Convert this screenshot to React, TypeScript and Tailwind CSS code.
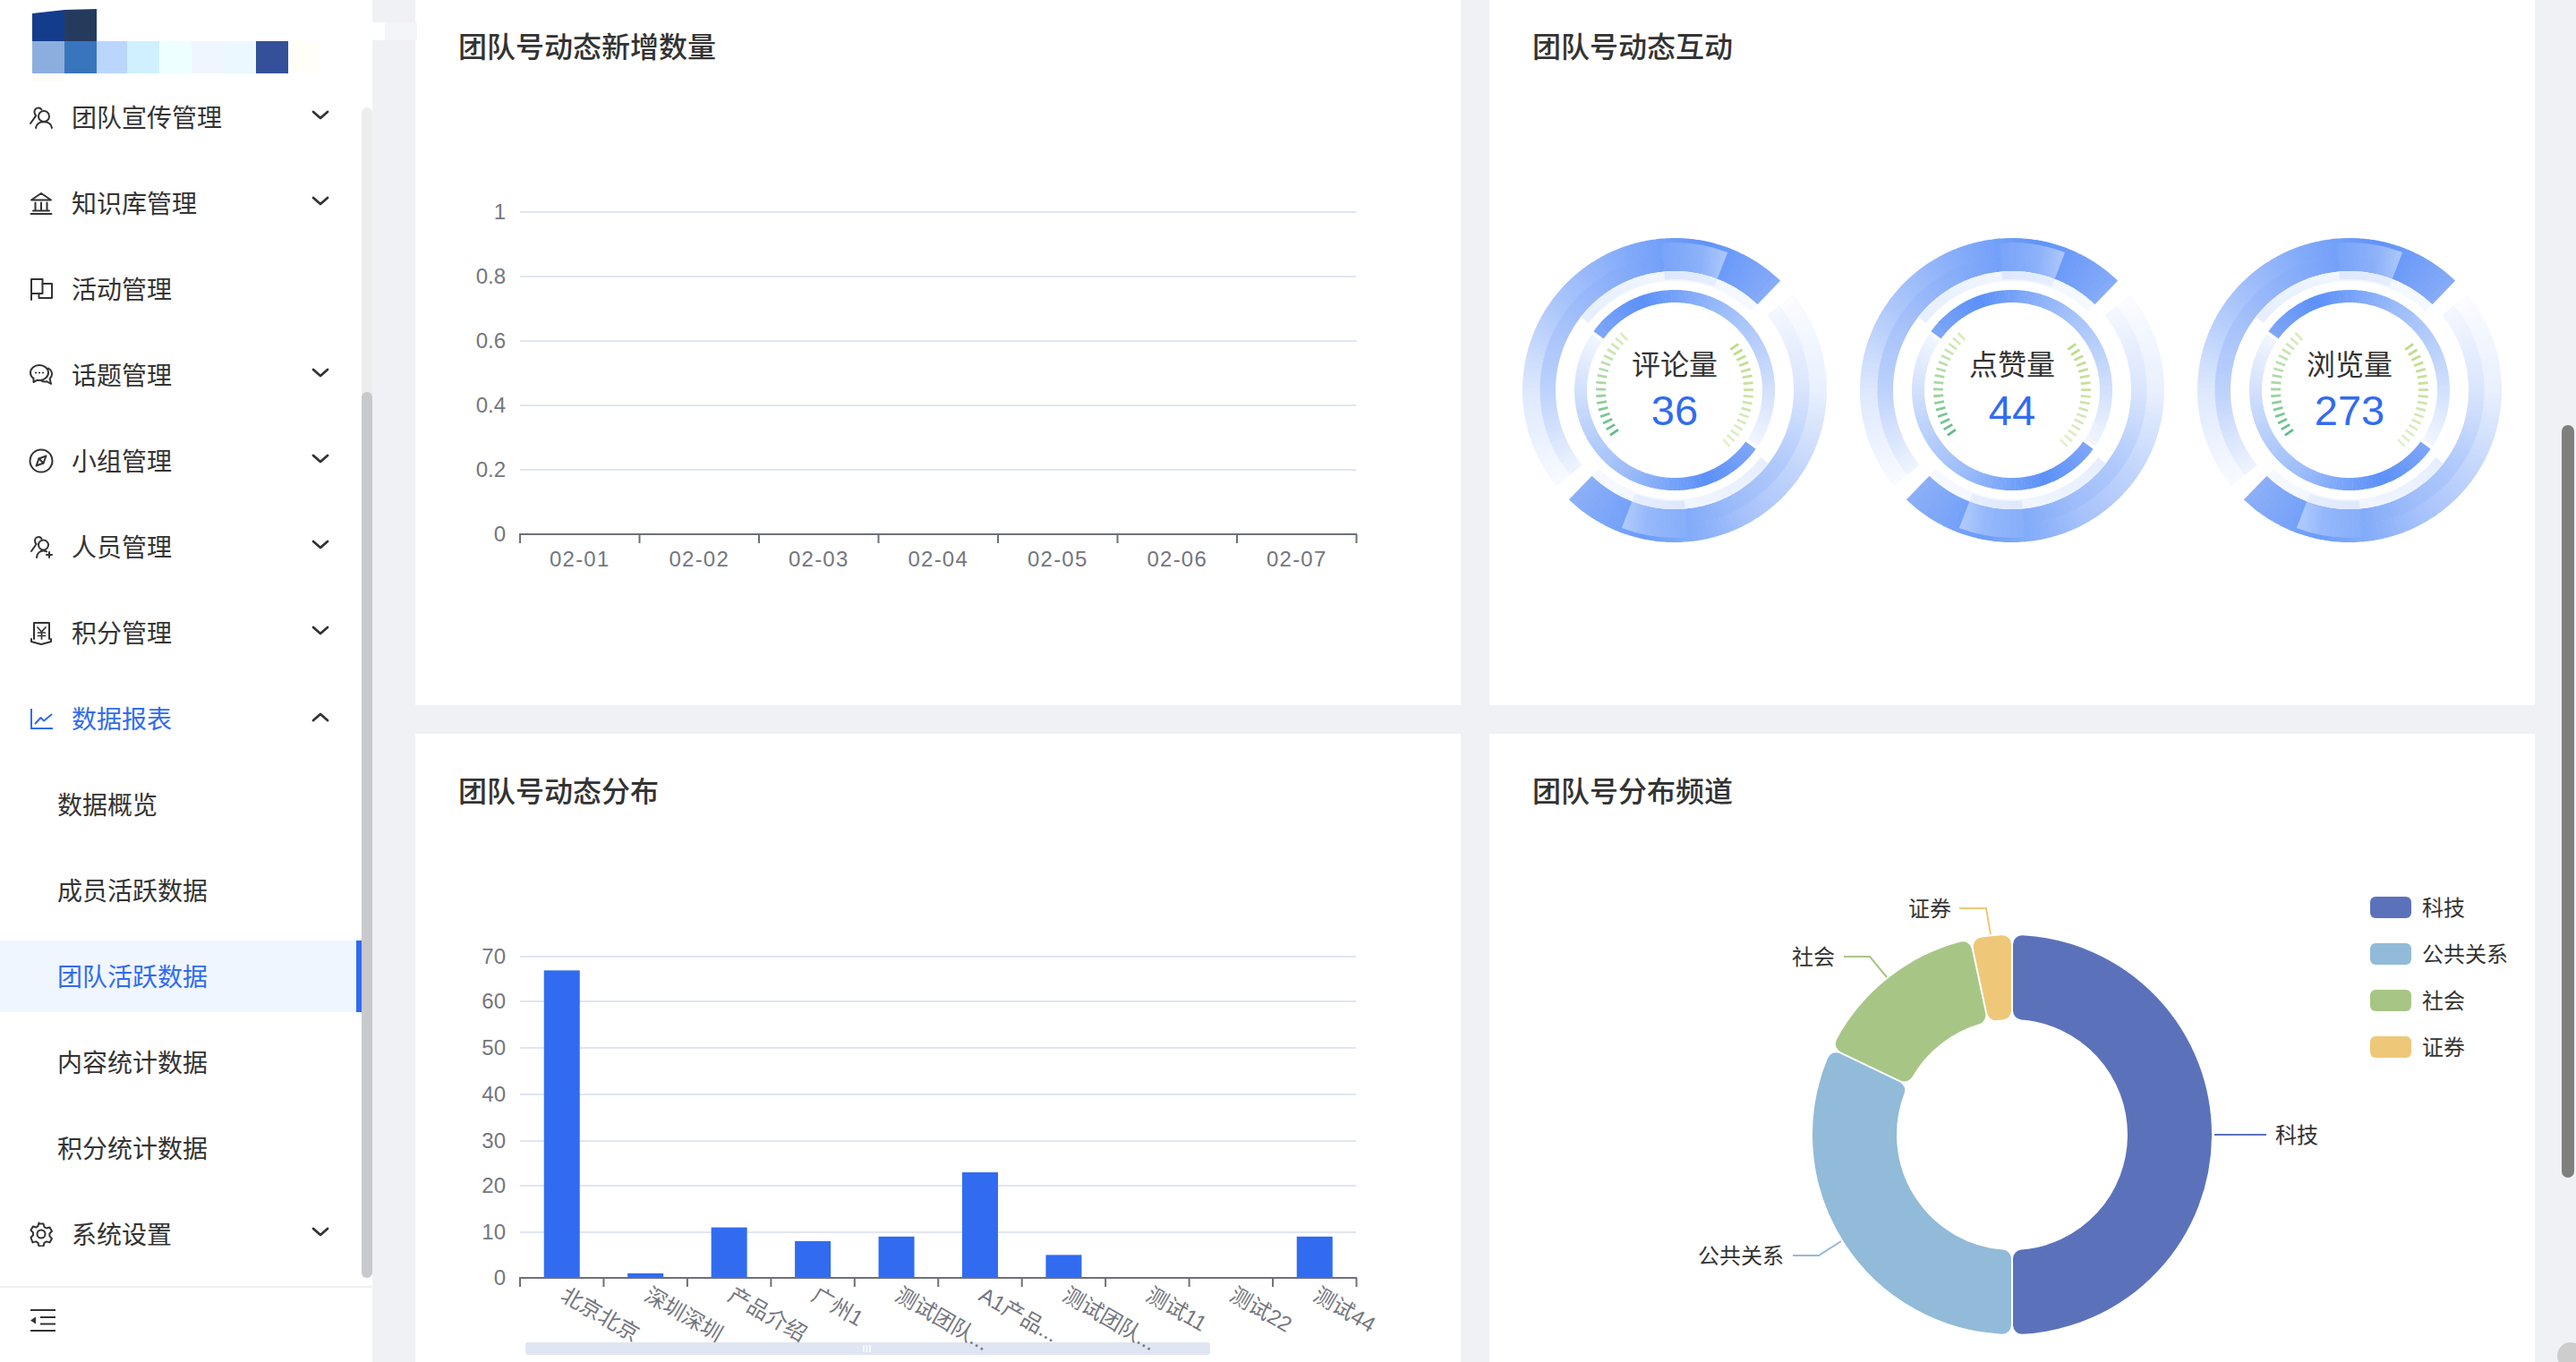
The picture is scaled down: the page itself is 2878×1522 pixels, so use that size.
import React from "react";

type Stop = [number, string];

const hex = (c: string) => [1, 3, 5].map((i) => parseInt(c.slice(i, i + 2), 16));
const colorAt = (stops: Stop[], a: number) => {
  for (let i = 0; i < stops.length - 1; i++) {
    const [a0, c0] = stops[i];
    const [a1, c1] = stops[i + 1];
    if (a >= a0 && a <= a1) {
      const t = (a - a0) / (a1 - a0);
      const x = hex(c0);
      const y = hex(c1);
      return `rgb(${x.map((v, k) => Math.round(v + (y[k] - v) * t)).join(",")})`;
    }
  }
  return stops[stops.length - 1][1];
};
const pt = (cx: number, cy: number, r: number, deg: number) => {
  const t = (deg * Math.PI) / 180;
  return [cx + r * Math.sin(t), cy - r * Math.cos(t)];
};
const sector = (cx: number, cy: number, r0: number, r1: number, a0: number, a1: number) => {
  const [x0, y0] = pt(cx, cy, r1, a0);
  const [x1, y1] = pt(cx, cy, r1, a1);
  const [x2, y2] = pt(cx, cy, r0, a1);
  const [x3, y3] = pt(cx, cy, r0, a0);
  const large = a1 - a0 > 180 ? 1 : 0;
  return `M${x0} ${y0}A${r1} ${r1} 0 ${large} 1 ${x1} ${y1}L${x2} ${y2}A${r0} ${r0} 0 ${large} 0 ${x3} ${y3}Z`;
};

function Band({ cx, cy, r0, r1, stops, rot = 0 }: { cx: number; cy: number; r0: number; r1: number; stops: Stop[]; rot?: number }) {
  const start = stops[0][0];
  const end = stops[stops.length - 1][0];
  const items: React.ReactNode[] = [];
  for (let a = start; a < end; a += 2) {
    const next = Math.min(a + 2.25, end);
    items.push(<path key={a} d={sector(cx, cy, r0, r1, a + rot, next + rot)} fill={colorAt(stops, a + 1)} />);
  }
  return <g>{items}</g>;
}

const outerA: Stop[] = [[231, "#f8faff"], [270, "#dde8fd"], [305, "#adc7fb"], [350, "#78a3f9"], [372, "#5f93f8"], [404, "#86abf8"]];
const midA: Stop[] = [[231, "#eff4fe"], [270, "#bcd1fc"], [305, "#a3bffa"], [350, "#78a3f9"], [372, "#5f93f8"], [404, "#86abf8"]];
const outerB: Stop[] = [[51, "#fafcff"], [90, "#e9f0fe"], [125, "#c0d4fc"], [150, "#a8c3fb"], [172, "#85adf9"], [192, "#6b9cf9"], [224, "#8cafF8"]];
const midB: Stop[] = [[51, "#f4f7ff"], [90, "#d9e5fd"], [125, "#b0cafb"], [150, "#9fbdfa"], [172, "#85adf9"], [192, "#6b9cf9"], [224, "#8cafF8"]];
const paleStops: Stop[] = [[308, "#e6eefe"], [350, "#f0f5ff"], [404, "#f6f9ff"]];
const innerStops: Stop[] = [[306, "#7ea6f8"], [340, "#5b90f8"], [390, "#9bbcfa"], [440, "#c8dafc"], [484, "#f2f6ff"]];

function Gauge({ cx, cy, label, value }: { cx: number; cy: number; label: string; value: string }) {
  const ticks: React.ReactNode[] = [];
  const left: Stop[] = [[235, "#5fbb88"], [270, "#a2d5a0"], [317, "#dcecbc"]];
  const right: Stop[] = [[54, "#bcdc88"], [95, "#cbe3a4"], [137, "#e4f0cf"]];
  for (let a = 235; a <= 317; a += 5.1) {
    const [x0, y0] = pt(cx, cy, 77, a);
    const [x1, y1] = pt(cx, cy, 88, a);
    ticks.push(<line key={`l${a}`} x1={x0} y1={y0} x2={x1} y2={y1} stroke={colorAt(left, a)} strokeWidth={2.8} />);
  }
  for (let a = 54; a <= 137; a += 5.1) {
    const [x0, y0] = pt(cx, cy, 77, a);
    const [x1, y1] = pt(cx, cy, 88, a);
    ticks.push(<line key={`r${a}`} x1={x0} y1={y0} x2={x1} y2={y1} stroke={colorAt(right, a)} strokeWidth={2.8} />);
  }
  return (
    <g>
      <Band cx={cx} cy={cy} r0={150} r1={170} stops={outerA} />
      <Band cx={cx} cy={cy} r0={133} r1={150.5} stops={midA} />
      <Band cx={cx} cy={cy} r0={150} r1={170} stops={outerB} />
      <Band cx={cx} cy={cy} r0={133} r1={150.5} stops={midB} />
      {[0, 180].map((rot) => (
        <g key={rot}>
          <Band cx={cx} cy={cy} r0={122} r1={133} stops={paleStops} rot={rot} />
          <Band cx={cx} cy={cy} r0={98} r1={112} stops={innerStops} rot={rot} />
          <g transform={`rotate(${rot} ${cx} ${cy})`}>
            <path d={sector(cx, cy, 133, 165, -5, 21)} fill="url(#patch)" />
            <path d={sector(cx, cy, 124, 133, -5, 21)} fill="url(#patchLow)" />
          </g>
        </g>
      ))}
      {ticks}
      <text x={cx} y={cy - 17} textAnchor="middle" fontSize={32} fill="#333333">{label}</text>
      <text x={cx} y={cy + 39} textAnchor="middle" fontSize={47} fill="#316bf0">{value}</text>
    </g>
  );
}

function Slice({ a0, a1, color }: { a0: number; a1: number; color: string }) {
  const cx = 2248, cy = 1268, R = 223, r = 129, rad = 10, gap = 1;
  const ro = R - rad, ri = r + rad;
  const d = rad + gap;
  const oa = (Math.asin(d / ro) * 180) / Math.PI;
  const ia = (Math.asin(d / ri) * 180) / Math.PI;
  const [x0, y0] = pt(cx, cy, ro, a0 + oa);
  const [x1, y1] = pt(cx, cy, ro, a1 - oa);
  const [x2, y2] = pt(cx, cy, ri, a1 - ia);
  const [x3, y3] = pt(cx, cy, ri, a0 + ia);
  const path = `M${x0} ${y0}A${ro} ${ro} 0 0 1 ${x1} ${y1}L${x2} ${y2}A${ri} ${ri} 0 0 0 ${x3} ${y3}Z`;
  return <path d={path} fill={color} stroke={color} strokeWidth={rad * 2} strokeLinejoin="round" />;
}

const svgFont = "font-['Liberation_Sans','Noto_Sans_CJK_SC',sans-serif]";
const axisText = "#74767e";

function LineChart() {
  const ys = [["1", 237], ["0.8", 309], ["0.6", 381], ["0.4", 453], ["0.2", 525]] as const;
  const days = ["02-01", "02-02", "02-03", "02-04", "02-05", "02-06", "02-07"];
  const step = (1515.5 - 581) / 7;
  return (
    <svg viewBox="464 76 1168 712" width={1168} height={712} className={svgFont}>
      {ys.map(([t, y]) => (
        <g key={t}>
          <line x1={581} x2={1515.5} y1={y} y2={y} stroke="#e0e6f1" strokeWidth={2} />
          <text x={565} y={y + 8} textAnchor="end" fontSize={24} fill={axisText}>{t}</text>
        </g>
      ))}
      <text x={565} y={605} textAnchor="end" fontSize={24} fill={axisText}>0</text>
      <line x1={580} x2={1516} y1={597} y2={597} stroke="#6e7079" strokeWidth={2} />
      {Array.from({ length: 8 }).map((_, i) => (
        <line key={i} x1={581 + step * i} x2={581 + step * i} y1={597} y2={607} stroke="#6e7079" strokeWidth={2} />
      ))}
      {days.map((d, i) => (
        <text key={d} x={581 + step * (i + 0.5)} y={633} textAnchor="middle" fontSize={24} letterSpacing={1.2} fill={axisText}>{d}</text>
      ))}
    </svg>
  );
}

function GaugeChart() {
  return (
    <svg viewBox="1664 76 1168 712" width={1168} height={712} className={svgFont}>
      <defs>
        <linearGradient id="patch" x1="0" y1="0" x2="1" y2="0">
          <stop offset="0" stopColor="#ffffff" stopOpacity={0.04} />
          <stop offset="1" stopColor="#ffffff" stopOpacity={0.45} />
        </linearGradient>
        <linearGradient id="patchLow" x1="0" y1="0" x2="1" y2="0">
          <stop offset="0" stopColor="#dbe6fd" stopOpacity={0.9} />
          <stop offset="1" stopColor="#dbe6fd" stopOpacity={0.5} />
        </linearGradient>
      </defs>
      <Gauge cx={1871} cy={436} label="评论量" value="36" />
      <Gauge cx={2248} cy={436} label="点赞量" value="44" />
      <Gauge cx={2625} cy={436} label="浏览量" value="273" />
    </svg>
  );
}

function BarChart() {
  const grid = [["70", 1069], ["60", 1119], ["50", 1171], ["40", 1223], ["30", 1275], ["20", 1325], ["10", 1377]] as const;
  const cats: [string, number][] = [["北京北京", 67], ["深圳深圳", 1], ["产品介绍", 11], ["广州1", 8], ["测试团队...", 9], ["A1产品...", 23], ["测试团队...", 5], ["测试11", 0], ["测试22", 0], ["测试44", 9]];
  const step = 93.45;
  const unit = (1428 - 1069) / 70;
  return (
    <svg viewBox="464 908 1168 712" width={1168} height={712} className={svgFont}>
      {grid.map(([t, y]) => (
        <g key={t}>
          <line x1={581} x2={1515} y1={y} y2={y} stroke="#e0e6f1" strokeWidth={2} />
          <text x={565} y={y + 8} textAnchor="end" fontSize={24} fill={axisText}>{t}</text>
        </g>
      ))}
      <text x={565} y={1436} textAnchor="end" fontSize={24} fill={axisText}>0</text>
      {cats.map(([, v], i) => (
        <rect key={i} x={581 + step * (i + 0.5) - 20} y={1428 - v * unit} width={40} height={v * unit} fill="#316bf0" />
      ))}
      <line x1={580} x2={1516} y1={1428} y2={1428} stroke="#6e7079" strokeWidth={2} />
      {Array.from({ length: 11 }).map((_, i) => (
        <line key={i} x1={581 + step * i} x2={581 + step * i} y1={1428} y2={1438} stroke="#6e7079" strokeWidth={2} />
      ))}
      <rect x={587} y={1500} width={765} height={14} rx={3} fill="#dfe5f2" />
      <g stroke="#ffffff" strokeWidth={1.5}>
        <line x1={965} x2={965} y1={1503} y2={1511} />
        <line x1={968.5} x2={968.5} y1={1503} y2={1511} />
        <line x1={972} x2={972} y1={1503} y2={1511} />
      </g>
      {cats.map(([t], i) => {
        const x = 581 + step * (i + 0.5) - 3;
        return (
          <text key={i} x={x} y={1452} transform={`rotate(30 ${x} 1452)`} fontSize={24} fill={axisText}>{t}</text>
        );
      })}
    </svg>
  );
}

function Donut() {
  const legend: [string, string][] = [["科技", "#5b72bb"], ["公共关系", "#91bbd8"], ["社会", "#a7c686"], ["证券", "#eec878"]];
  return (
    <svg viewBox="1664 908 1168 712" width={1168} height={712} className={svgFont}>
      <Slice a0={0} a1={180} color="#5b72bb" />
      <Slice a0={180} a1={295.5} color="#91bbd8" />
      <Slice a0={295.5} a1={348} color="#a7c686" />
      <Slice a0={348} a1={360} color="#eec878" />
      <g fill="none" strokeWidth={2}>
        <polyline points="2474,1268 2532,1268" stroke="#5b72bb" />
        <polyline points="2003,1403 2032,1403 2057,1387" stroke="#91bbd8" />
        <polyline points="2060,1069 2089,1069 2108,1092" stroke="#a7c686" />
        <polyline points="2189,1015 2219,1015 2224,1044" stroke="#eec878" />
      </g>
      <g fontSize={24} fill="#333333">
        <text x={2542} y={1277}>科技</text>
        <text x={1897} y={1412}>公共关系</text>
        <text x={2002} y={1078}>社会</text>
        <text x={2132} y={1024}>证券</text>
      </g>
      {legend.map(([t, c], i) => (
        <g key={t}>
          <rect x={2648} y={1002 + 52 * i} width={46} height={24} rx={6} fill={c} />
          <text x={2706} y={1023 + 52 * i} fontSize={24} fill="#333333">{t}</text>
        </g>
      ))}
    </svg>
  );
}

const Ico = ({ children, color = "#333333" }: { children: React.ReactNode; color?: string }) => (
  <svg width={28} height={28} viewBox="0 0 28 28" fill="none" stroke={color} strokeWidth={2} strokeLinecap="round" strokeLinejoin="round" className="shrink-0">
    {children}
  </svg>
);

const icons: Record<string, React.ReactNode> = {
  team: (
    <Ico>
      <circle cx="17" cy="13" r="6" />
      <path d="M8 26c.6-4 4-6.700 9-6.700s8.400 2.700 9 6.700" />
      <path d="M14.500 5.500c-.9-1.300-2.200-2-3.500-2-2.500 0-4.500 2-4.500 4.500 0 1.800.7 3.200 1.800 4.200L2 21" />
    </Ico>
  ),
  bank: (
    <Ico>
      <path d="M3 10.500 14 3l11 7.500H3Z" />
      <path d="M7.500 13.500V22M14 13.500V22M20.500 13.500V22M5 22.500h18M2.500 26h23" />
    </Ico>
  ),
  flag: (
    <Ico color="#333333">
      <path d="M3 26V3h12.500v16H3" />
      <path d="M15.500 8H26v16H11.500v-5" />
    </Ico>
  ),
  chat: (
    <Ico>
      <path d="M12 3C6.500 3 2 6.600 2 11.500c0 2.700 1.300 4.800 3.500 6.300V22l4.300-2.300c.7.100 1.400.2 2.200.2 5.500 0 10-3.600 10-8.400S17.500 3 12 3Z" />
      <path d="M22 6.500c2.500 1.500 4 3.800 4 6.500 0 2.100-.9 3.900-2.400 5.300L25 24l-5-2.800c-2 .4-4 .3-5.700-.6" />
      <path d="M8 11.500h.01M12 11.500h.01M16 11.500h.01" strokeWidth={2.200} />
    </Ico>
  ),
  compass: (
    <Ico>
      <circle cx="14" cy="14" r="12.500" />
      <path d="M19.500 8.500 16.500 16.500 8.500 19.500 11.500 11.500Z" />
      <path d="M11.500 11.500 16.500 16.500" />
    </Ico>
  ),
  userAdd: (
    <Ico>
      <circle cx="16.500" cy="12" r="5.500" />
      <path d="M9 26c.4-4.400 3.200-7.500 7.500-7.500 1.400 0 2.600.3 3.600.9" />
      <path d="M14.500 5c-.8-1.300-2-2-3.300-2-2.400 0-4.200 2-4.200 4.200 0 1.600.6 2.900 1.600 3.800L3 19" />
      <path d="M23 20v6M20 23h6" />
    </Ico>
  ),
  yen: (
    <Ico>
      <path d="M6 21V3h17v18" />
      <path d="M3 21v3l11 3 11-3v-3" />
      <path d="m10 8 4.500 5 4.500-5M14.500 13v8M10.500 14h8M10.500 17.500h8" strokeWidth={1.700} />
    </Ico>
  ),
  chart: (
    <Ico color="#316bf0">
      <path d="M3 3v22h24" strokeLinecap="butt" strokeLinejoin="miter" />
      <path d="m7.500 19.500 6-6.500 3.500 3.500 8.500-7" />
    </Ico>
  ),
  gear: (
    <Ico>
      <path d="M11.500 2.500h5l1 3.600 2.400 1.400 3.600-1 2.500 4.300-2.600 2.700v2.900l2.600 2.700-2.500 4.300-3.600-1-2.400 1.400-1 3.600h-5l-1-3.600-2.400-1.400-3.600 1L2.400 18l2.600-2.700v-2.900L2.400 9.800l2.500-4.300 3.600 1 2-1.400 1-3.600Z" />
      <circle cx="14" cy="14" r="4.500" />
    </Ico>
  ),
};

const Chevron = ({ up = false }: { up?: boolean }) => (
  <svg width={20} height={14} viewBox="0 0 20 14" fill="none" stroke="#333333" strokeWidth={2.800} strokeLinecap="round" strokeLinejoin="round" className="absolute left-[348px] top-[31px]">
    <path d={up ? "M2 11l8-7 8 7" : "M2 3l8 7 8-7"} />
  </svg>
);

function MenuRow({ icon, label, open, active, noArrow }: { icon: string; label: string; open?: boolean; active?: boolean; noArrow?: boolean }) {
  return (
    <div className={`relative flex h-20 items-center gap-5 pl-8 text-[28px] ${active ? "text-[#316bf0]" : "text-[#333333]"}`}>
      {icons[icon]}
      <span className="mb-[3px]">{label}</span>
      {!noArrow && <Chevron up={open} />}
    </div>
  );
}

function SubRow({ label, active }: { label: string; active?: boolean }) {
  return (
    <div className={`flex h-20 items-center pl-16 text-[28px] ${active ? "border-r-[6px] border-[#316bf0] bg-[#eff6ff] text-[#316bf0]" : "text-[#333333]"}`}>
      <span className="mb-[3px]">{label}</span>
    </div>
  );
}

function Card({ title, children }: { title: string; children: React.ReactNode }) {
  return (
    <section className="flex h-[800px] flex-col overflow-hidden bg-white pt-10">
      <h2 className="h-12 pl-12 text-[32px] leading-[45px] font-medium text-[#333333]">{title}</h2>
      {children}
    </section>
  );
}

const mosaicTop = ["bg-[#143c8c] [clip-path:polygon(0_14%,100%_3%,100%_100%,0_100%)]", "bg-[#253b5e] [clip-path:polygon(0_3%,100%_0,100%_100%,0_100%)]"];
const mosaicRow = ["bg-[#8caede] w-9", "bg-[#3875bd] w-9", "bg-[#bbd6fd] w-[34px]", "bg-[#d0f0ff] w-9", "bg-[#eeffff] w-9", "bg-[#f0f6ff] w-9", "bg-[#ecf8ff] w-9", "bg-[#345098] w-9", "bg-[#fffff8] w-9"];

export default function App() {
  return (
    <div className="relative flex h-[1522px] w-[2878px] overflow-hidden bg-[#eff1f5] font-['Noto_Sans_CJK_SC',sans-serif]">
      <aside className="flex h-full w-[416px] shrink-0 flex-col bg-white">
        <div className="relative flex h-[91px] shrink-0 flex-col pl-9 pt-2.5">
          <div className="flex h-9">
            {mosaicTop.map((c) => (
              <div key={c} className={`h-9 w-9 ${c}`} />
            ))}
          </div>
          <div className="flex h-9">
            {mosaicRow.map((c) => (
              <div key={c} className={`h-9 ${c}`} />
            ))}
          </div>
          <div className="h-[23px] w-9 bg-[#fffcf8]" />
        </div>
        <div className="flex min-h-0 flex-1">
          <nav className="flex w-[404px] flex-col gap-4">
            <MenuRow icon="team" label="团队宣传管理" />
            <MenuRow icon="bank" label="知识库管理" />
            <MenuRow icon="flag" label="活动管理" noArrow />
            <MenuRow icon="chat" label="话题管理" />
            <MenuRow icon="compass" label="小组管理" />
            <MenuRow icon="userAdd" label="人员管理" />
            <MenuRow icon="yen" label="积分管理" />
            <MenuRow icon="chart" label="数据报表" open active />
            <SubRow label="数据概览" />
            <SubRow label="成员活跃数据" />
            <SubRow label="团队活跃数据" active />
            <SubRow label="内容统计数据" />
            <SubRow label="积分统计数据" />
            <MenuRow icon="gear" label="系统设置" />
          </nav>
          <div className="mt-[29px] h-[1308px] w-3 rounded-t-md rounded-b-md bg-[#ededed]">
            <div className="mt-[318px] h-[990px] w-3 rounded-b-md rounded-t-md bg-[#c8c9cc]" />
          </div>
        </div>
        <div className="flex h-[85px] shrink-0 items-start border-t-2 border-[#f0f0f0] pl-[34px] pt-6">
          <svg width={28} height={25} viewBox="0 0 28 25" fill="none" stroke="#333333" strokeWidth={2}>
            <path d="M0 1h28M11 9h17M11 16.500h17M0 24h28" />
            <path d="M6 8.500v8l-6-4z" fill="#333333" stroke="none" />
          </svg>
        </div>
      </aside>

      <main className="-mt-3 grid h-fit flex-1 grid-cols-[1168px_1168px] gap-8 pl-12">
        <Card title="团队号动态新增数量"><LineChart /></Card>
        <Card title="团队号动态互动"><GaugeChart /></Card>
        <Card title="团队号动态分布"><BarChart /></Card>
        <Card title="团队号分布频道"><Donut /></Card>
      </main>

      <div className="absolute left-[416px] top-[25px] h-5 w-[14px] bg-white" />
      <div className="absolute left-[430px] top-[25px] h-5 w-9 bg-[#f3f6f9]" />
      <div className="absolute left-[2862px] top-[475px] h-[841px] w-[14px] rounded-full bg-[#7f7f7f]" />
      <div className="absolute left-[2857px] top-[1500px] h-[30px] w-[30px] rounded-full bg-[#cdcdcd]" />
    </div>
  );
}
